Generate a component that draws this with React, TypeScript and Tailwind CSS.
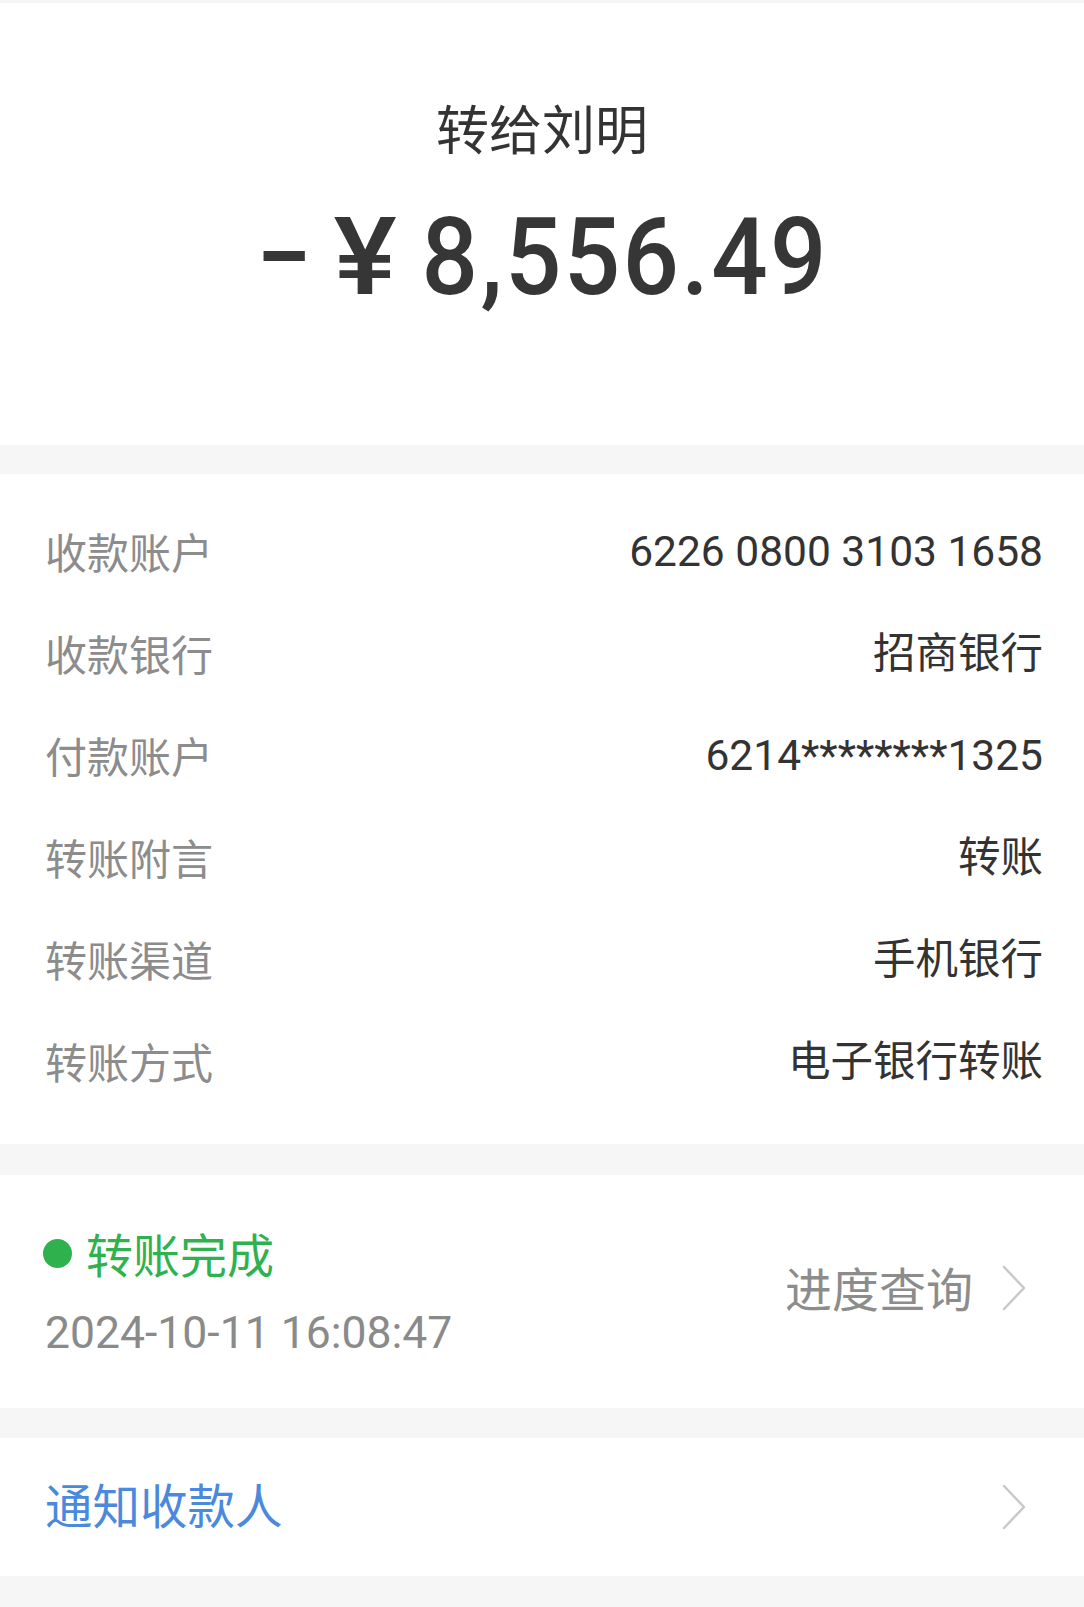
import React from "react";

const cjk = { fontFamily: '"Noto Sans CJK SC", sans-serif' } as const;

function Chevron() {
  return (
    <svg width="24" height="46" viewBox="0 0 24 46" fill="none" className="shrink-0">
      <polyline points="2,2 22,23 2,44" stroke="#c9c9c9" strokeWidth="2.5" strokeLinecap="round" strokeLinejoin="round" />
    </svg>
  );
}

const rows: [string, string][] = [
  ["收款账户", "6226 0800 3103 1658"],
  ["收款银行", "招商银行"],
  ["付款账户", "6214********1325"],
  ["转账附言", "转账"],
  ["转账渠道", "手机银行"],
  ["转账方式", "电子银行转账"],
];

export default function App() {
  return (
    <div
      className="w-[1084px] min-h-[1607px] bg-[#f6f6f6] flex flex-col"
      style={{ fontFamily: 'Roboto, "Noto Sans CJK SC", sans-serif' }}
    >
      <div className="h-[3px] bg-[#f4f4f4]" />
      {/* Header */}
      <div className="bg-white h-[442px] flex flex-col items-center pt-[93px]">
        <div className="text-[53px] leading-[62px] text-[#333333]" style={cjk}>
          转给刘明
        </div>
        <div className="mt-[39px] flex items-baseline justify-center text-[108px] leading-[120px] font-medium text-[#363636] scale-x-[0.92]">
          <span>−</span>
          <span className="ml-[29px] inline-block scale-x-[1.2]">¥</span>
          <span className="ml-[33px] tracking-[2.5px]">8,556.49</span>
        </div>
      </div>

      {/* Details */}
      <div className="mt-[29px] bg-white pt-[27px] pb-[31px] pl-[45px] pr-[41px]">
        {rows.map(([k, v]) => (
          <div key={k} className="h-[102px] flex items-center justify-between">
            <span className="text-[42px] text-[#8c8c8c] -mt-[3px]" style={cjk}>
              {k}
            </span>
            <span className="text-[42.5px] text-[#333333]">{v}</span>
          </div>
        ))}
      </div>

      {/* Status */}
      <div className="mt-[31px] bg-white h-[233px] flex items-center justify-between pl-[43px] pr-[58px]">
        <div className="flex flex-col">
          <div className="flex items-center h-[56px]">
            <span className="w-[29px] h-[29px] rounded-full bg-[#2fb24e]" />
            <span className="ml-[14px] text-[47px] text-[#2fb24e]" style={cjk}>
              转账完成
            </span>
          </div>
          <div className="mt-[28px] h-[48px] flex items-center text-[44.5px] text-[#8a8a8a] pl-[2px]">
            2024-10-11 16:08:47
          </div>
        </div>
        <div className="flex items-center mb-[8px]">
          <span className="text-[47px] text-[#8c8c8c]" style={cjk}>
            进度查询
          </span>
          <span className="ml-[29px]">
            <Chevron />
          </span>
        </div>
      </div>

      {/* Notify */}
      <div className="mt-[30px] bg-white h-[138px] flex items-center justify-between pl-[45px] pr-[58px]">
        <span className="text-[47.5px] text-[#4a89dc] mb-[6px]" style={cjk}>
          通知收款人
        </span>
        <Chevron />
      </div>
      <div className="h-[31px]" />
    </div>
  );
}
